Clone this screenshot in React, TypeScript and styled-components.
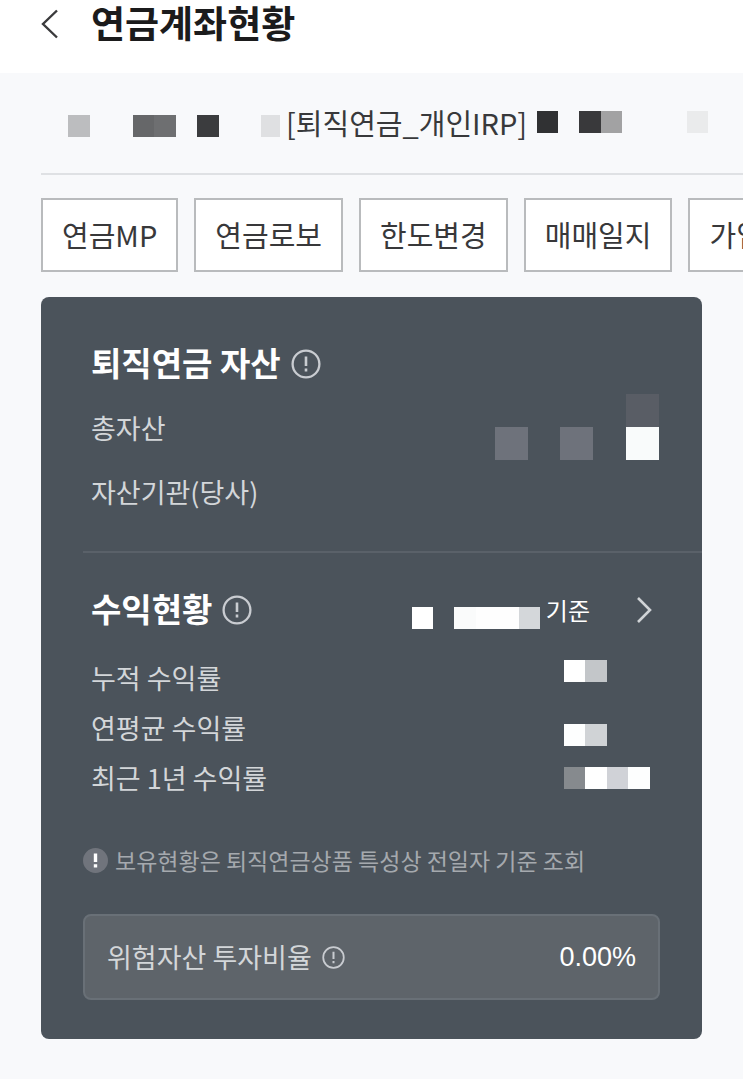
import React from "react";
import styled, { createGlobalStyle } from "styled-components";

const GlobalStyle = createGlobalStyle`
  *, *::before, *::after { box-sizing: border-box; }
  body {
    margin: 0;
    background: #f8f9fb;
    color: #1b1b1c;
    font-family: "Noto Sans CJK KR", "Noto Sans", sans-serif;
    overflow-x: hidden;
  }
  h1, h2, p, dl, dt, dd { margin: 0; }
  button { font: inherit; color: inherit; cursor: pointer; }
`;

const Header = styled.header`
  display: flex;
  align-items: center;
  gap: 32px;
  padding: 0 41px 25px;
  background: #fff;
`;

const IconButton = styled.button`
  display: flex;
  flex: none;
  padding: 0;
  border: 0;
  background: none;
`;

const PageTitle = styled.h1`
  padding-bottom: 4px;
  font-size: 37px;
  font-weight: 700;
  line-height: 44px;
`;

const Main = styled.main`
  padding: 0 0 39px 41px;
  overflow: hidden;
`;

const AccountRow = styled.div`
  display: flex;
  align-items: center;
  height: 102px;
  padding-left: 27px;
  border-bottom: 2px solid #dfe1e4;
  white-space: nowrap;
`;

const AccountName = styled.p`
  margin: 0 10px 0 6px;
  padding-bottom: 2px;
  color: #38393b;
  font-size: 29px;
  line-height: 40px;
`;

const TabList = styled.nav`
  display: flex;
  gap: 16px;
  margin: 23px 0 25px;
`;

const Tab = styled.button`
  flex: none;
  height: 74px;
  padding: 0 19px 2px;
  border: 2px solid #b9bbbd;
  background: #fff;
  color: #38383a;
  font-size: 29px;
  line-height: 40px;
  white-space: nowrap;
`;

const Card = styled.section`
  margin-right: 41px;
  padding-bottom: 39px;
  border-radius: 8px;
  background: #4b535b;
  color: #d3d6d9;
`;

const Group = styled.div<{ $top: number; $bottom: number }>`
  padding: ${(p) => p.$top}px 43px ${(p) => p.$bottom}px 50px;
`;

const Divider = styled.hr`
  height: 2px;
  margin: 0 0 0 42px;
  border: 0;
  background: #5a6169;
`;

const TitleRow = styled.div<{ $gap: number }>`
  display: flex;
  align-items: center;
  gap: 10px;
  height: 48px;
  margin-bottom: ${(p) => p.$gap}px;
`;

const CardTitle = styled.h2`
  padding-bottom: 4px;
  color: #fff;
  font-size: 33px;
  font-weight: 700;
  line-height: 44px;
`;

const BaseDate = styled.div`
  display: flex;
  align-items: center;
  gap: 6px;
  margin-left: auto;
  padding-right: 36px;
  color: #fff;
  font-size: 24px;
  line-height: 32px;
`;

const DetailButton = styled(IconButton)`
  margin-right: 7px;
`;

const Item = styled.div<{ $height: number; $align?: string }>`
  display: flex;
  align-items: ${(p) => p.$align ?? "center"};
  justify-content: space-between;
  height: ${(p) => p.$height}px;
  font-size: 27px;

  dt { line-height: ${(p) => p.$height}px; }
`;

const Notice = styled.p`
  display: flex;
  align-items: center;
  gap: 7px;
  padding: 0 42px;
  color: #a5a9ae;
  font-size: 23px;
  line-height: 34px;
`;

const RatioBox = styled.div`
  display: flex;
  align-items: center;
  gap: 10px;
  height: 86px;
  margin: 37px 42px 0;
  padding: 0 22px;
  border: 2px solid #697077;
  border-radius: 8px;
  background: #5e646a;
  font-size: 27px;
  line-height: 40px;
`;

const RatioValue = styled.span`
  margin-left: auto;
  color: #fff;
  font-family: "Liberation Sans", sans-serif;
`;

const MosaicGrid = styled.span<{ $up: number; $down: number }>`
  display: flex;
  flex: none;
  flex-direction: column;
  margin-top: ${(p) => p.$down}px;
  margin-bottom: ${(p) => p.$up}px;
`;

const MosaicLine = styled.span`
  display: flex;
`;

const MosaicCell = styled.span<{ $width: number; $height: number; $color: string }>`
  width: ${(p) => p.$width}px;
  height: ${(p) => p.$height}px;
  background: ${(p) => p.$color};
`;

type Cell = [width: number, color?: string];

function Mosaic({ lines, size = 22, up = 0, down = 0 }: {
  lines: Cell[][];
  size?: number;
  up?: number;
  down?: number;
}) {
  return (
    <MosaicGrid $up={up} $down={down} aria-hidden="true">
      {lines.map((line, i) => (
        <MosaicLine key={i}>
          {line.map(([width, color], j) => (
            <MosaicCell key={j} $width={width} $height={size} $color={color ?? "transparent"} />
          ))}
        </MosaicLine>
      ))}
    </MosaicGrid>
  );
}

function InfoIcon({ size }: { size: number }) {
  return (
    <svg width={size} height={size} viewBox="0 0 30 30" fill="none" stroke="#c9ccd1">
      <circle cx="15" cy="15" r="13.4" strokeWidth="2.3" />
      <path d="M15 7.5v9.5M15 19.6v2.8" strokeWidth="2.6" />
    </svg>
  );
}

function NoticeIcon() {
  return (
    <svg width="25" height="25" viewBox="0 0 25 25" fill="none">
      <circle cx="12.5" cy="12.5" r="12.5" fill="#70747c" />
      <path d="M12.5 5.5v8.6M12.5 16.3v3.2" stroke="#fff" strokeWidth="3.4" />
    </svg>
  );
}

const tabs = ["연금MP", "연금로보", "한도변경", "매매일지", "가입"];

const returns: { label: string; cells: Cell[]; up?: number; down?: number }[] = [
  { label: "누적 수익률", cells: [[21, "#ffffff"], [22, "#c3c6c9"], [52]], up: 14 },
  { label: "연평균 수익률", cells: [[21, "#fdfefe"], [22, "#d0d3d6"], [52]], down: 14 },
  {
    label: "최근 1년 수익률",
    cells: [[21, "#868a8e"], [22, "#ffffff"], [21, "#d0d2d7"], [22, "#fdfefe"], [9]],
  },
];

export default function App() {
  return (
    <>
      <GlobalStyle />
      <Header>
        <IconButton aria-label="뒤로">
          <svg width="18" height="30" viewBox="0 0 18 30" fill="none" stroke="#3a3a3c" strokeWidth="2.4">
            <path d="M16 1.5L2 15L16 28.5" />
          </svg>
        </IconButton>
        <PageTitle>연금계좌현황</PageTitle>
      </Header>
      <Main>
        <AccountRow>
          <Mosaic
            down={5}
            lines={[[
              [22, "#bcbdbf"], [43], [21, "#666769"], [22, "#6e6f71"], [21],
              [22, "#3b3c3e"], [42], [19, "#dfe0e2"],
            ]]}
          />
          <AccountName>[퇴직연금_개인IRP]</AccountName>
          <Mosaic
            up={2}
            lines={[[[21, "#303133"], [21], [22, "#39393b"], [21, "#a2a2a3"], [65], [21, "#eaebec"]]]}
          />
        </AccountRow>
        <TabList>
          {tabs.map((tab) => (
            <Tab key={tab}>{tab}</Tab>
          ))}
        </TabList>
        <Card>
          <Group $top={43} $bottom={27}>
            <TitleRow $gap={8}>
              <CardTitle>퇴직연금 자산</CardTitle>
              <IconButton aria-label="퇴직연금 자산 안내">
                <InfoIcon size={30} />
              </IconButton>
            </TitleRow>
            <dl>
              <Item $height={64} $align="flex-end">
                <dt>총자산</dt>
                <dd>
                  <Mosaic
                    size={33}
                    lines={[
                      [[131], [33, "#595d65"]],
                      [[33, "#6e727b"], [32], [33, "#6e727b"], [33], [33, "#f9fbfb"]],
                    ]}
                  />
                </dd>
              </Item>
              <Item $height={64}>
                <dt>자산기관(당사)</dt>
              </Item>
            </dl>
          </Group>
          <Divider />
          <Group $top={33} $bottom={40}>
            <TitleRow $gap={19}>
              <CardTitle>수익현황</CardTitle>
              <IconButton aria-label="수익현황 안내">
                <InfoIcon size={30} />
              </IconButton>
              <BaseDate>
                <Mosaic
                  down={15}
                  lines={[[[21, "#ffffff"], [21], [22, "#fafbfb"], [43, "#fefefe"], [21, "#d4d7da"]]]}
                />
                기준
              </BaseDate>
              <DetailButton aria-label="수익현황 상세">
                <svg width="16" height="28" viewBox="0 0 16 28" fill="none" stroke="#d0d3d6" strokeWidth="2.6">
                  <path d="M2 2L14 14L2 26" />
                </svg>
              </DetailButton>
            </TitleRow>
            <dl>
              {returns.map(({ label, cells, up, down }) => (
                <Item key={label} $height={50}>
                  <dt>{label}</dt>
                  <dd>
                    <Mosaic lines={[cells]} up={up} down={down} />
                  </dd>
                </Item>
              ))}
            </dl>
          </Group>
          <Notice>
            <NoticeIcon />
            보유현황은 퇴직연금상품 특성상 전일자 기준 조회
          </Notice>
          <RatioBox>
            <span>위험자산 투자비율</span>
            <IconButton aria-label="위험자산 투자비율 안내">
              <InfoIcon size={23} />
            </IconButton>
            <RatioValue>0.00%</RatioValue>
          </RatioBox>
        </Card>
      </Main>
    </>
  );
}
